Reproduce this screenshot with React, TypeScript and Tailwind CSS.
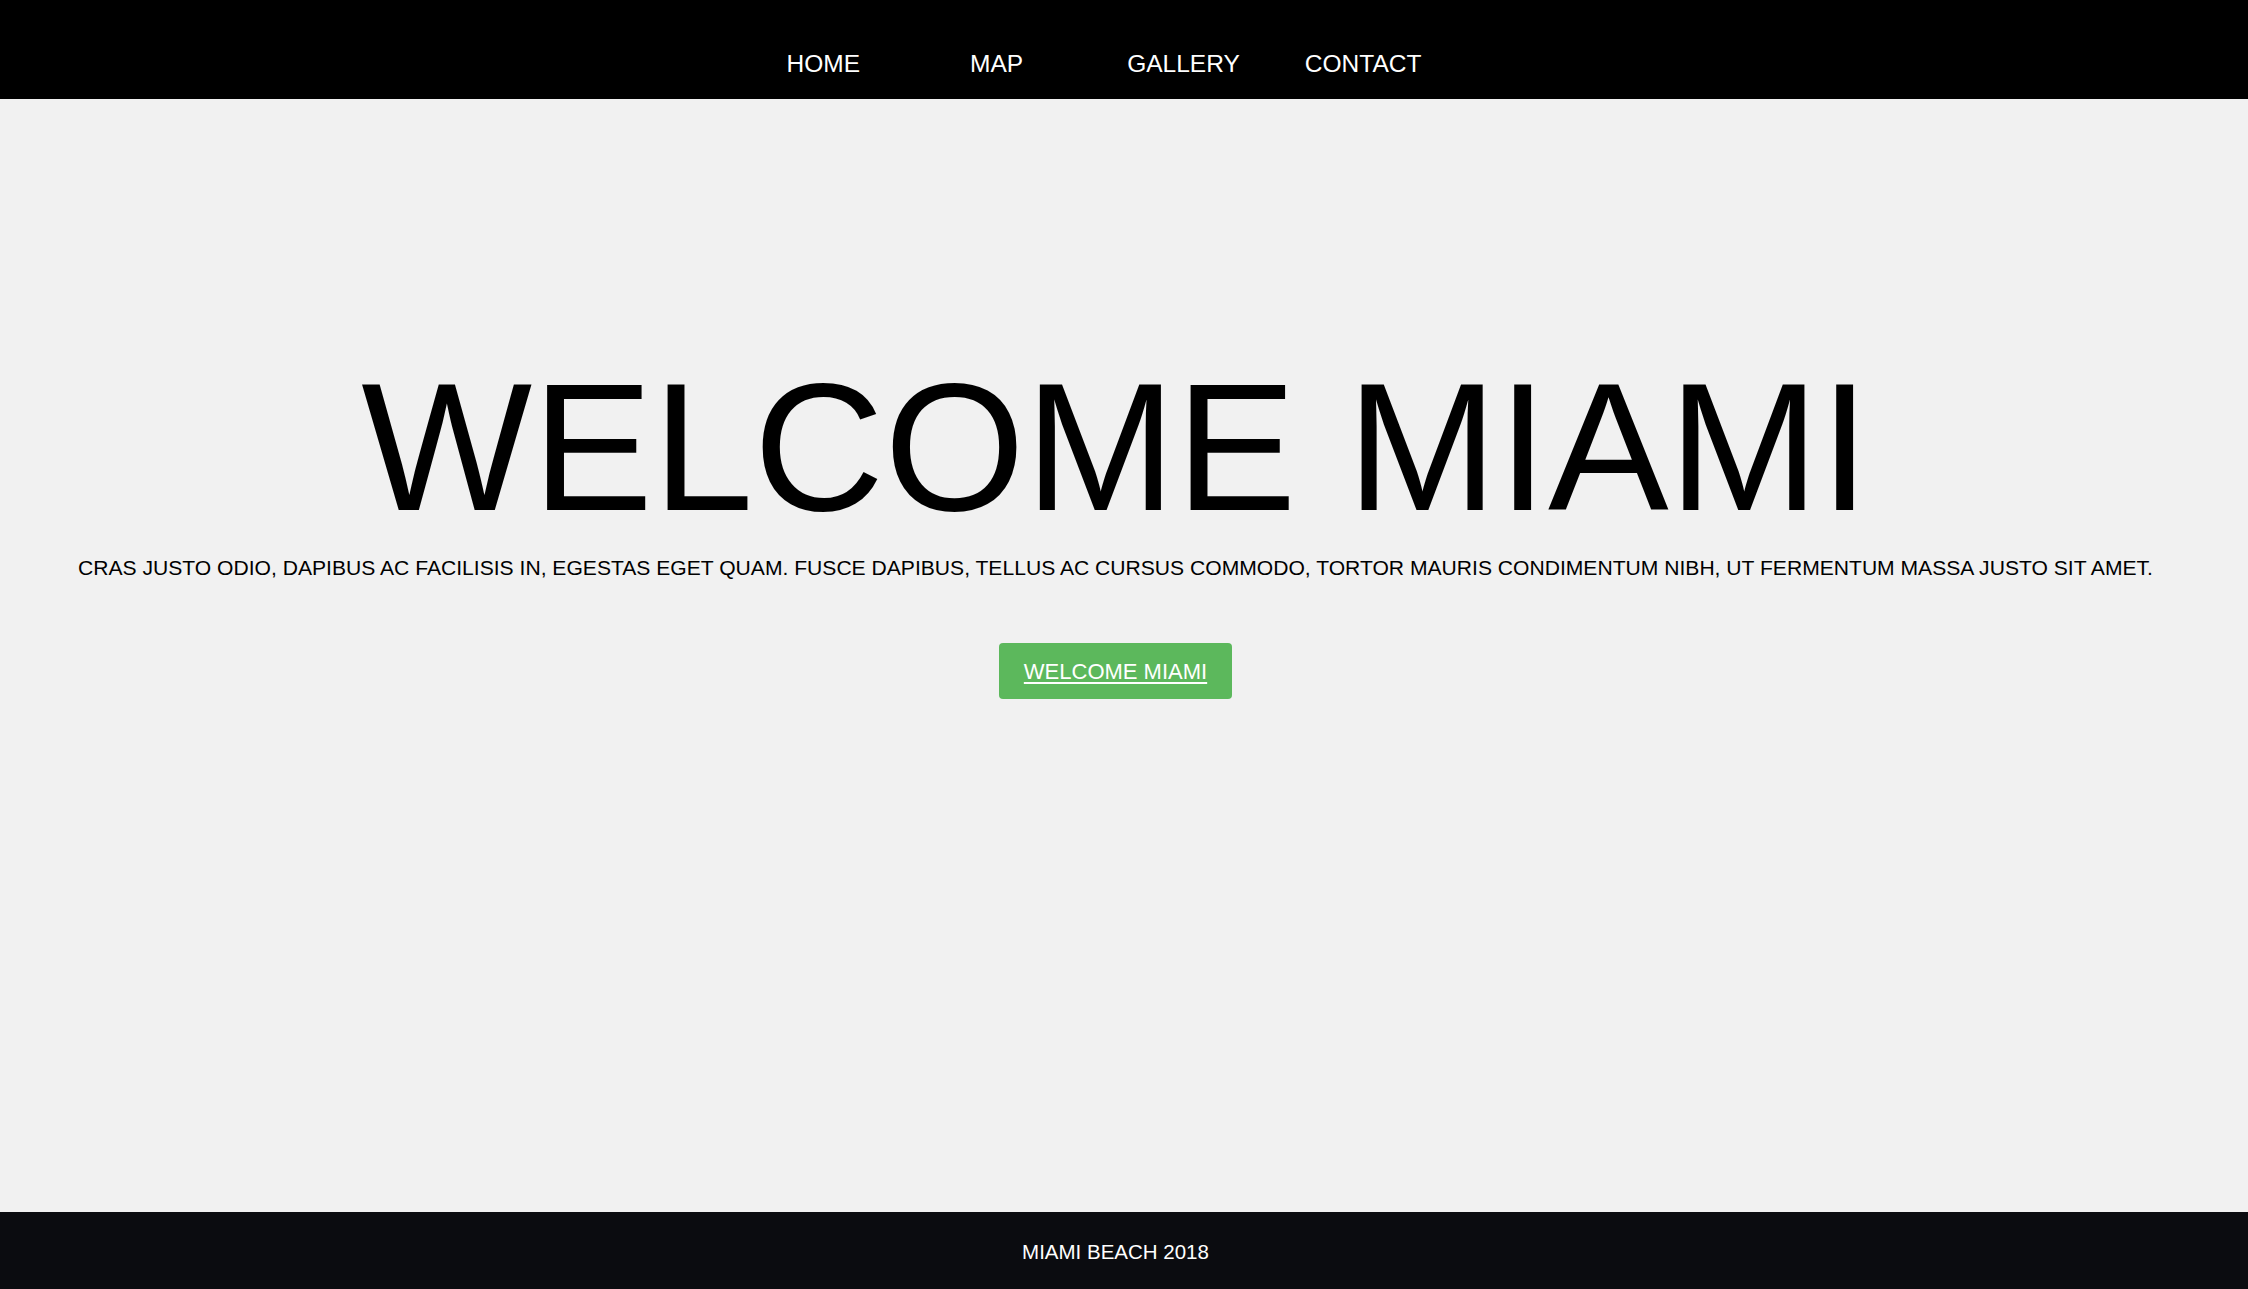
import React from "react";

export default function App() {
  return (
    <div
      className="flex min-h-screen flex-col bg-[#f1f1f1] text-black"
      style={{ fontFamily: '"Liberation Sans", Arial, Helvetica, sans-serif' }}
    >
      <nav className="h-[99px] bg-black">
        <ul className="flex justify-center pr-[40px] pt-[52px] text-[24.5px] leading-none text-white">
          <li className="mr-[110px]">HOME</li>
          <li className="mr-[104px]">MAP</li>
          <li className="mr-[65px]">GALLERY</li>
          <li>CONTACT</li>
        </ul>
      </nav>
      <main className="flex flex-1 flex-col items-center pr-[17px] pt-[258px]">
        <h1 className="text-[181px] font-normal leading-none">WELCOME MIAMI</h1>
        <p className="mt-[19px] text-[21.1px] leading-none">
          CRAS JUSTO ODIO, DAPIBUS AC FACILISIS IN, EGESTAS EGET QUAM. FUSCE DAPIBUS, TELLUS AC CURSUS COMMODO, TORTOR MAURIS CONDIMENTUM NIBH, UT FERMENTUM MASSA JUSTO SIT AMET.
        </p>
        <a
          href="#"
          className="mt-[65px] flex h-[56px] items-center rounded-[4px] bg-[#5cb85c] px-[25px] text-[22px] text-white underline underline-offset-[3px]"
        >
          WELCOME MIAMI
        </a>
      </main>
      <footer className="flex h-[77px] items-center justify-center bg-[#0b0c10] pr-[17px] pt-[3px] text-[20.5px] text-white">
        MIAMI BEACH 2018
      </footer>
    </div>
  );
}
